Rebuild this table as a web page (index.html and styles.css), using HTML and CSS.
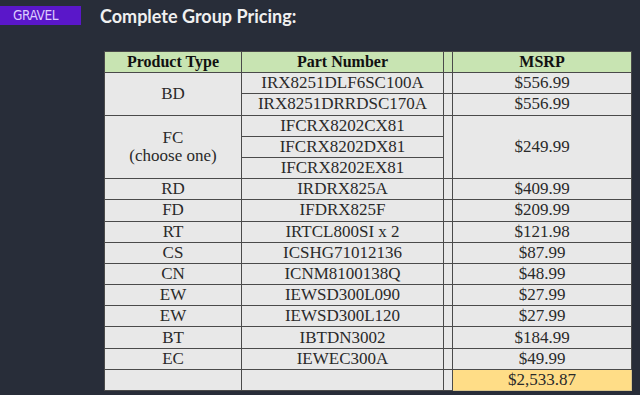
FILE: index.html
```html
<!DOCTYPE html>
<html>
<head>
<meta charset="utf-8">
<link rel="stylesheet" href="styles.css">
</head>
<body>
<div class="page">
  <header class="top">
    <div class="badge">GRAVEL</div>
    <h1 class="title">Complete Group Pricing:</h1>
  </header>
  <table class="pricing">
    <colgroup>
      <col class="c-type"><col class="c-part"><col class="c-gap"><col class="c-msrp">
    </colgroup>
    <thead>
      <tr><th>Product Type</th><th>Part Number</th><th class="gap"></th><th>MSRP</th></tr>
    </thead>
    <tbody>
      <tr><td rowspan="2">BD</td><td>IRX8251DLF6SC100A</td><td class="gap"></td><td>$556.99</td></tr>
      <tr><td>IRX8251DRRDSC170A</td><td class="gap"></td><td>$556.99</td></tr>
      <tr><td rowspan="3">FC<br>(choose one)</td><td>IFCRX8202CX81</td><td class="gap" rowspan="3"></td><td rowspan="3">$249.99</td></tr>
      <tr><td>IFCRX8202DX81</td></tr>
      <tr><td>IFCRX8202EX81</td></tr>
      <tr><td>RD</td><td>IRDRX825A</td><td class="gap"></td><td>$409.99</td></tr>
      <tr><td>FD</td><td>IFDRX825F</td><td class="gap"></td><td>$209.99</td></tr>
      <tr><td>RT</td><td>IRTCL800SI x 2</td><td class="gap"></td><td>$121.98</td></tr>
      <tr><td>CS</td><td>ICSHG71012136</td><td class="gap"></td><td>$87.99</td></tr>
      <tr><td>CN</td><td>ICNM8100138Q</td><td class="gap"></td><td>$48.99</td></tr>
      <tr><td>EW</td><td>IEWSD300L090</td><td class="gap"></td><td>$27.99</td></tr>
      <tr><td>EW</td><td>IEWSD300L120</td><td class="gap"></td><td>$27.99</td></tr>
      <tr><td>BT</td><td>IBTDN3002</td><td class="gap"></td><td>$184.99</td></tr>
      <tr><td>EC</td><td>IEWEC300A</td><td class="gap"></td><td>$49.99</td></tr>
      <tr><td></td><td></td><td class="gap"></td><td class="total">$2,533.87</td></tr>
    </tbody>
  </table>
</div>
</body>
</html>
```

FILE: styles.css
```css
html, body {
  margin: 0;
  padding: 0;
  background: #282d39;
}

.page {
  width: 640px;
  height: 395px;
  overflow: hidden;
  background: #282d39;
}

.top {
  display: flex;
  align-items: flex-start;
  height: 51px;
}

.badge {
  margin-top: 6px;
  width: 81px;
  height: 19px;
  box-sizing: border-box;
  padding-left: 13px;
  background: #5a17c9;
  color: #dccbff;
  font-family: "DejaVu Sans", sans-serif;
  font-stretch: condensed;
  font-size: 13.5px;
  line-height: 19px;
  letter-spacing: -0.4px;
}

.title {
  margin: 4px 0 0 19px;
  font-family: Lato, sans-serif;
  font-weight: 700;
  font-size: 18px;
  line-height: 24px;
  color: #f0f0f0;
}

.pricing {
  margin-left: 104px;
  border-collapse: collapse;
  table-layout: fixed;
  width: 527px;
  font-family: "Liberation Serif", "Times New Roman", serif;
  font-size: 17px;
  color: #2a2a2a;
}

.c-type { width: 137px; }
.c-part { width: 202px; }
.c-gap { width: 9px; }
.c-msrp { width: 179px; }

.pricing th,
.pricing td {
  border: 1px solid #4a4a4a;
  padding: 0;
  height: 20.2px;
  line-height: 18px;
  text-align: center;
  vertical-align: middle;
}

.pricing th {
  background: #c8e4b2;
  color: #111;
  font-weight: 700;
  font-size: 16px;
}

.pricing td {
  background: #e8e8e8;
}

.pricing td.total {
  background: #ffdd87;
  border-color: #d9c58c;
}
```
